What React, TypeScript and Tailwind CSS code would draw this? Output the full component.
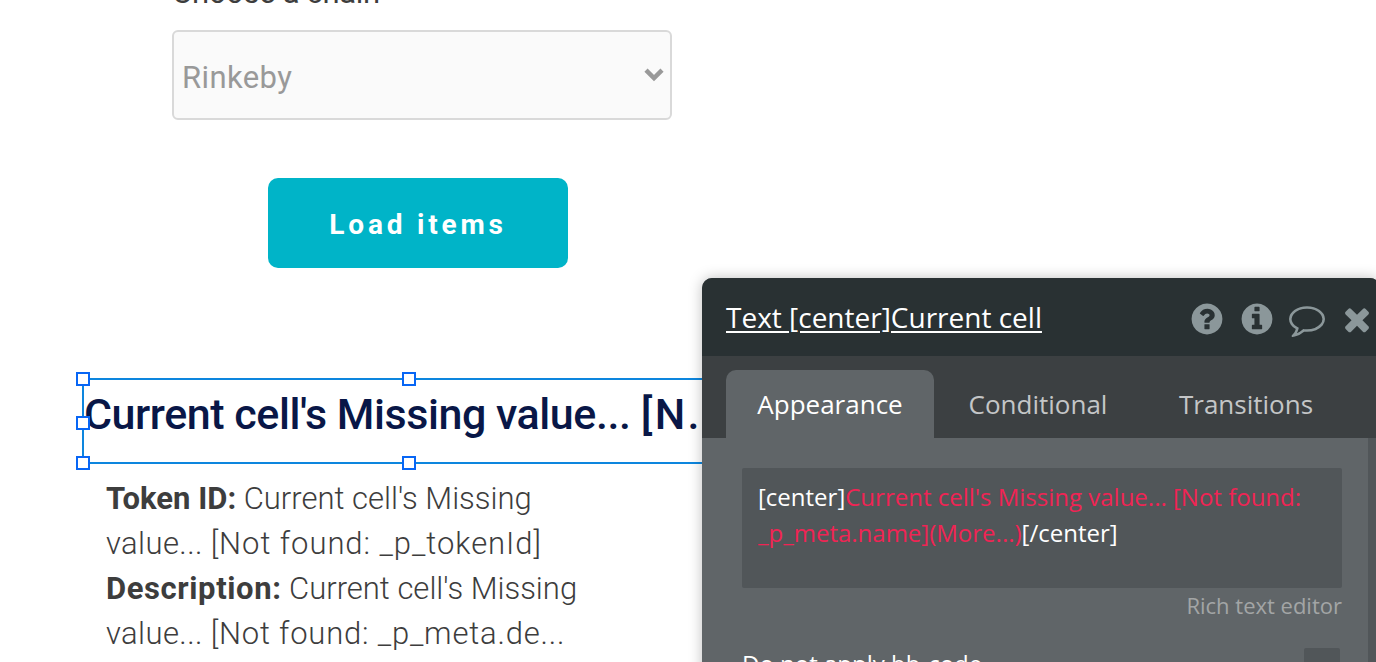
import type { ReactNode } from "react";

const ICONS = {
  help: "M1024 1376v-192q0-14-9-23t-23-9h-192q-14 0-23 9t-9 23v192q0 14 9 23t23 9h192q14 0 23-9t9-23zM1280 704q0-88-55.5-163t-138.5-116-170-41q-243 0-371 213-15 24 8 42l132 100q7 6 19 6 16 0 25-12 53-68 86-92 34-24 86-24 48 0 85.5 26t37.5 59q0 38-20 61t-68 45q-63 28-115.5 86.5t-52.5 125.5v36q0 14 9 23t23 9h192q14 0 23-9t9-23q0-19 21.5-49.5t54.5-49.5q32-18 49-28.5t46-35 44.5-48 28-60.5 12.5-81zM1664 896q0 209-103 385.5t-279.5 279.5-385.5 103-385.5-103-279.5-279.5-103-385.5 103-385.5 279.5-279.5 385.5-103 385.5 103 279.5 279.5 103 385.5z",
  info: "M1152 1376v-160q0-14-9-23t-23-9h-96v-512q0-14-9-23t-23-9h-320q-14 0-23 9t-9 23v160q0 14 9 23t23 9h96v320h-96q-14 0-23 9t-9 23v160q0 14 9 23t23 9h448q14 0 23-9t9-23zM1024 480v-160q0-14-9-23t-23-9h-192q-14 0-23 9t-9 23v160q0 14 9 23t23 9h192q14 0 23-9t9-23zM1664 896q0 209-103 385.5t-279.5 279.5-385.5 103-385.5-103-279.5-279.5-103-385.5 103-385.5 279.5-279.5 385.5-103 385.5 103 279.5 279.5 103 385.5z",
  comment:
    "M896 384q-204 0-381.5 69.5t-282 187.5-104.5 255q0 112 71.5 213.5t201.5 175.5l87 50-27 96q-24 91-70 172 152-63 275-171l43-38 57 6q69 8 130 8 204 0 381.5-69.5t282-187.5 104.5-255-104.5-255-282-187.5-381.5-69.5zm896 512q0 174-120 321.5t-326 233-450 85.5q-70 0-145-8-198 175-460 242-49 14-114 22h-5q-15 0-27-10.5t-16-27.5v-1q-3-4-.5-12t2-10 4.5-9.5l6-9 7-8.5 8-9q7-8 31-34.5t34.5-38 31-39.5 32.5-51 27-59 26-76q-157-89-247.5-220t-90.5-281q0-130 71-248.5t191-204.5 286-136.5 348-50.5 348 50.5 286 136.5 191 204.5 71 248.5z",
  close:
    "M1490 1322q0 40-28 68l-136 136q-28 28-68 28t-68-28l-294-294-294 294q-28 28-68 28t-68-28l-136-136q-28-28-28-68t28-68l294-294-294-294q-28-28-28-68t28-68l136-136q28-28 68-28t68 28l294 294 294-294q28-28 68-28t68 28l136 136q28 28 28 68t-28 68l-294 294 294 294q28 28 28 68z",
};

function PanelIcon({ name }: { name: keyof typeof ICONS }) {
  return (
    <button aria-label={name} className="shrink-0">
      <svg viewBox="0 0 1792 1792" className="block w-9 h-9" fill="#8b979a">
        <path d={ICONS[name]} />
      </svg>
    </button>
  );
}

function Handle({ className }: { className: string }) {
  return <span className={`absolute w-3.5 h-3.5 bg-white border-2 border-[#0866f5] ${className}`} />;
}

function Expr({ children }: { children: ReactNode }) {
  return <span className="text-[#f02454]">{children}</span>;
}

function Canvas() {
  return (
    <main className="w-[820px] font-['Roboto',sans-serif] text-[#3d3d3d]">
      {/* Chain picker */}
      <div className="pl-[172px]">
        <label className="flex items-end h-[30px] pb-[19px] text-[31px] leading-[36px] tracking-[-0.3px]">
          Choose a chain
        </label>
        <div className="flex items-center justify-between w-[500px] h-[90px] pl-2 pr-1.5 bg-[#fafafa] border-2 border-[#d9d9d9] rounded-md text-[#999999]">
          <span className="text-[31px] leading-[36px] tracking-[0.4px] pt-1.5">Rinkeby</span>
          <svg viewBox="0 0 20 14" className="w-5 h-3.5" fill="none" stroke="#999999" strokeWidth="4.5">
            <path d="M2 2.2L10 10L18 2.2" />
          </svg>
        </div>
      </div>

      <button className="block w-[300px] h-[90px] mt-[58px] ml-[268px] pt-1 bg-[#00b4c8] rounded-[10px] text-white text-[28px] font-bold tracking-[3.8px]">
        Load items
      </button>

      {/* Selected text element */}
      <div className="relative w-[654px] h-[86px] mt-[110px] ml-[82px] border-2 border-[#0d86de]">
        <h2 className="pt-2 text-[43px] leading-[52px] font-medium tracking-[-0.45px] text-[#091747] whitespace-nowrap">
          Current cell's Missing value... <span className="tracking-[2.4px]">[N...</span>
        </h2>
        <Handle className="-top-2 -left-2" />
        <Handle className="-top-2 left-[318px]" />
        <Handle className="top-9 -left-2" />
        <Handle className="-bottom-2 -left-2" />
        <Handle className="-bottom-2 left-[318px]" />
      </div>

      <div className="pt-3 pl-[106px] text-[31px] leading-[45px] font-light whitespace-nowrap">
        <p>
          <b className="font-bold">Token ID:</b> Current cell's Missing
          <br />
          <span className="tracking-[0.4px]">value... </span>
          <span className="tracking-[0.95px]">[Not found: _p_tokenId]</span>
        </p>
        <p>
          <b className="font-bold tracking-[0.6px]">Description:</b> Current cell's Missing
          <br />
          <span className="tracking-[0.4px]">value... </span>
          <span className="tracking-[0.8px]">[Not found: _p_meta.de...</span>
        </p>
      </div>
    </main>
  );
}

function PropertyPanel() {
  return (
    <aside className="absolute top-[278px] left-[702px] w-[678px] h-[500px] rounded-t-[10px] bg-[#606568] shadow-[0_0_14px_rgba(0,0,0,0.25)] font-['Open_Sans',sans-serif] text-white">
      <header className="flex items-center h-[78px] pl-6 rounded-t-[10px] bg-[#293133]">
        <h3 className="w-[463px] text-[28px] leading-[38px] underline decoration-2 underline-offset-[3px]">
          Text [center]Current cell
        </h3>
        <div className="flex gap-3.5 pt-1">
          <PanelIcon name="help" />
          <PanelIcon name="info" />
          <PanelIcon name="comment" />
          <PanelIcon name="close" />
        </div>
      </header>

      <nav className="flex h-[82px] pt-3.5 pl-6 bg-[#3c4042] text-[26px] text-[#c4c6c7]">
        <button className="w-52 rounded-t-[10px] bg-[#606568] text-white">Appearance</button>
        <button className="w-52">Conditional</button>
        <button className="w-52">Transitions</button>
      </nav>

      <div className="flex">
        <section className="w-[666px] h-[340px] pt-[30px] pl-10 pr-[26px]">
          <div className="h-[120px] px-4 pt-[11px] rounded-xs bg-[#515659] text-[24px] leading-9 whitespace-nowrap">
            [center]<Expr>Current cell's Missing value... [Not found:</Expr>
            <br />
            <Expr>_p_meta.name](More...)</Expr>[/center]
          </div>
          <p className="mt-0.5 text-right text-[22px] leading-[30px] text-[#a3a5a6]">Rich text editor</p>
          <div className="flex items-start justify-between mt-[26px] pr-0.5">
            <span className="text-[24px] leading-9">Do not apply bb-code</span>
            <span className="w-9 h-9 mt-0.5 rounded-xs bg-[#515659]" />
          </div>
        </section>
        <div className="w-3 bg-[#515659]" />
      </div>
    </aside>
  );
}

export default function App() {
  return (
    <div className="relative w-[1376px] h-[662px] overflow-hidden bg-white">
      <Canvas />
      <PropertyPanel />
    </div>
  );
}
